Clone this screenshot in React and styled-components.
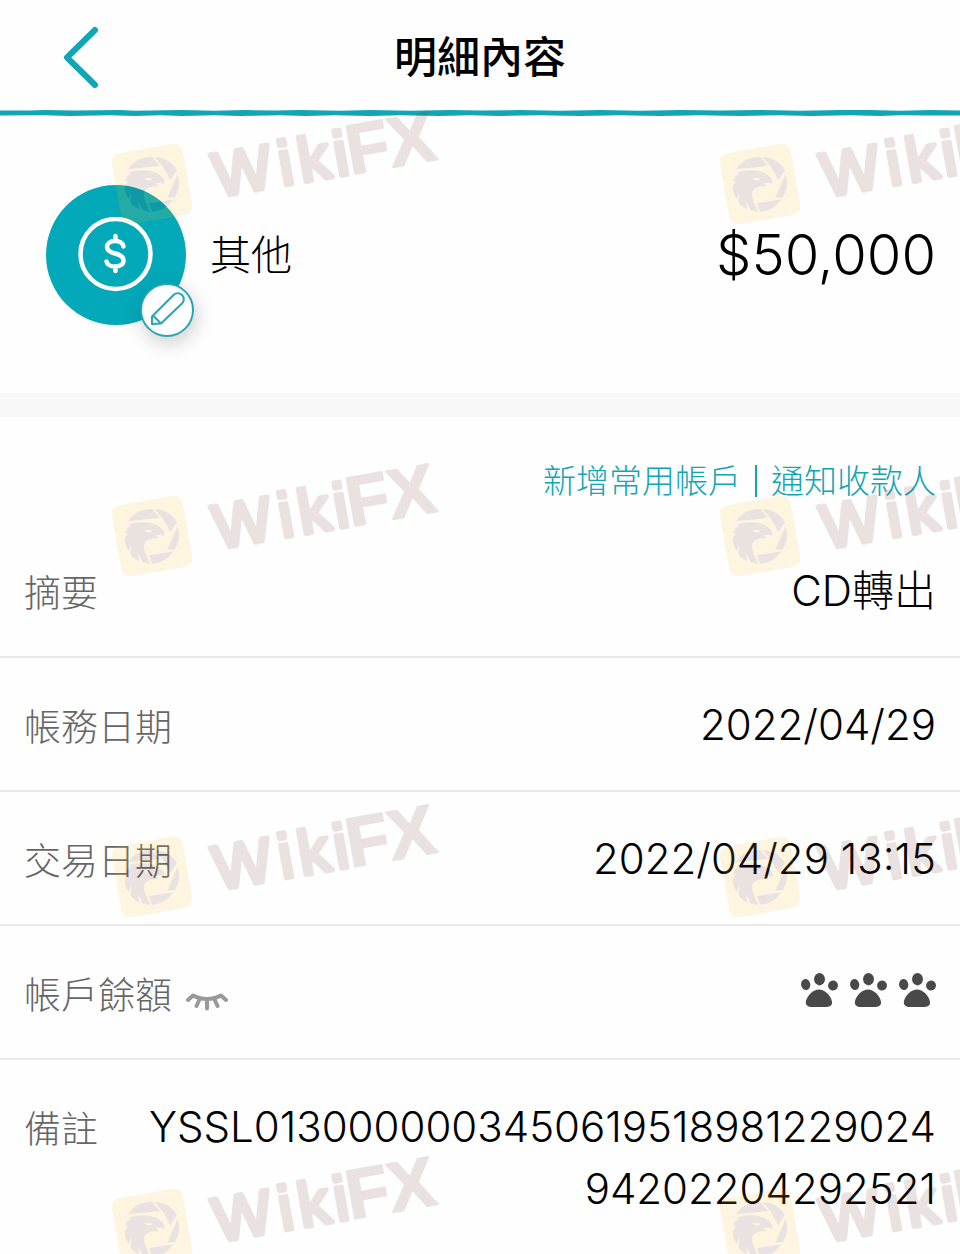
import React, { useState } from "react";
import styled, { createGlobalStyle } from "styled-components";

const details = [
  { label: "摘要", value: "CD轉出" },
  { label: "帳務日期", value: "2022/04/29" },
  { label: "交易日期", value: "2022/04/29 13:15" },
];

const note = "YSSL013000000345061951898122902494202204292521";

const App = () => {
  const [hidden, setHidden] = useState(true);
  return (
    <Page>
      <GlobalStyle />
      <Header>
        <BackButton type="button" aria-label="返回">
          <svg width="40" height="64" viewBox="0 0 40 64">
            <path d="M35 5L7 32.500L35 60" />
          </svg>
        </BackButton>
        <h1>明細內容</h1>
      </Header>
      <BrushLine />
      <Summary>
        <Category>
          <DollarIcon />
          <EditButton type="button" aria-label="編輯分類">
            <PencilIcon />
          </EditButton>
        </Category>
        <h2>其他</h2>
        <Amount>$50,000</Amount>
      </Summary>
      <Band />
      <Actions>
        <ActionButton type="button">新增常用帳戶</ActionButton>
        <Divider />
        <ActionButton type="button">通知收款人</ActionButton>
      </Actions>
      <List>
        {details.map((item) => (
          <Row key={item.label}>
            <dt>{item.label}</dt>
            <dd>{item.value}</dd>
          </Row>
        ))}
        <Row>
          <dt>
            帳戶餘額
            <EyeButton
              type="button"
              aria-label="顯示餘額"
              aria-pressed={!hidden}
              onClick={() => setHidden(!hidden)}
            >
              <ClosedEye />
            </EyeButton>
          </dt>
          <Paws>
            <Paw />
            <Paw />
            <Paw />
          </Paws>
        </Row>
        <Row $last>
          <dt>備註</dt>
          <dd>{note}</dd>
        </Row>
      </List>
      <Watermarks aria-hidden="true">
        {[...Array(8)].map((_, i) => (
          <Watermark key={i} />
        ))}
      </Watermarks>
    </Page>
  );
};

const BrushLine = () => (
  <Brush viewBox="0 0 960 6" preserveAspectRatio="none" aria-hidden="true">
    <path d="M0 .5L30 .6L45 0L75 .6L120 .1L135 .8L165 .2L182 0L215 .7L245 .1L275 .5L300 0L340 .7L370 0L410 .7L450 0L480 .5L520 0L560 .7L600 0L640 .7L680 0L720 .6L760 0L800 .7L840 0L870 0L900 .7L930 0L960 .5V5.400L930 5.600L900 5.200L880 6L850 5.300L810 5.900L780 5.200L740 5.900L700 5.200L660 5.900L620 5.300L580 6L540 5.200L500 5.900L470 5.300L440 5.900L400 5.200L370 6L335 5.300L305 6L280 5.300L240 6L215 5.300L182 6L160 5.300L135 6L110 5.300L70 5.900L45 5.300L0 5.500Z" />
  </Brush>
);

const DollarIcon = () => (
  <svg width="76" height="76" viewBox="0 0 76 76" fill="none" stroke="#fff">
    <circle cx="37.500" cy="37" r="35" strokeWidth="4.500" />
    <path
      d="M45.500 29.500C45 26 41.500 24 37 24C32 24 29 26.800 29 30C29 34 32 35.300 37 36.500C42.500 37.800 45.500 39.500 45.500 43.500C45.500 47.500 42 49.500 37 49.500C32.500 49.500 29 47.500 28.500 44.500M37.500 19V24M37.500 49.500V54"
      strokeWidth="4.500"
      strokeLinecap="round"
    />
  </svg>
);

const PencilIcon = () => (
  <svg width="36" height="36" viewBox="0 0 36 36" fill="none" stroke="#26a5b3">
    <path
      d="M3 32V24.500L24.500 3A6 6 0 0 1 33 11.500L12 31.500L3 32ZM4.500 24L12 31.500"
      strokeWidth="2"
      strokeLinejoin="round"
    />
  </svg>
);

const ClosedEye = () => (
  <svg width="44" height="20" viewBox="0 0 44 20" fill="none" stroke="#999">
    <path
      d="M4 9L9 4.500C17 9 29 9 37 4.500L42 9M15.500 8.500L12.500 15M23 9V17.500M30.500 8.500L33.500 15"
      strokeWidth="4"
      strokeLinecap="round"
      strokeLinejoin="round"
    />
  </svg>
);

const Paw = () => (
  <svg width="37" height="36" viewBox="0 0 37 36" fill="#4a494a">
    <ellipse cx="4.700" cy="12.500" rx="4.600" ry="5.600" transform="rotate(-8 4.700 12.500)" />
    <ellipse cx="18.500" cy="7.200" rx="5.400" ry="6.200" />
    <ellipse cx="32" cy="13.500" rx="4.900" ry="5" transform="rotate(20 32 13.500)" />
    <path d="M18 17.500C23.500 17.500 30 23.500 31 30C31.500 34 28 35 24 35H11C7 35 4 33 5 29C6.500 23 12.500 17.500 18 17.500Z" />
  </svg>
);

const Watermark = () => (
  <Mark width="350" height="140" viewBox="0 0 350 140">
    <rect x="16" y="50" width="72" height="72" rx="9" fill="#ffc120" transform="rotate(-10 52 86)" />
    <g transform="scale(.33333)" fill="#643228">
      <path d="M84 214C99 189 123 177 156 176L179 204L84 214Z" />
      <path d="M163 177C193 178 217 192 231 216L211 246L190 208Z" />
      <path d="M233 228C241 252 237 278 224 298L202 299Z" />
      <path d="M147 316L220 304C204 328 182 340 156 341Z" />
      <path
        d="M88 223C108 216 130 215 150 219C169 222 180 230 188 239C194 246 195 254 192 259C186 253 176 254 166 256C175 261 176 264 173 265C157 264 138 268 133 281C127 299 142 318 151 341C142 341 134 339 128 337L114 308L118 334C105 329 97 321 91 312L95 283L86 303C76 288 73 275 75 263L86 248L76 251C78 241 81 235 85 232L94 231ZM133 239L158 242C151 250 139 248 133 239Z"
        fillRule="evenodd"
      />
    </g>
    <MarkText transform="translate(118 103) rotate(-10)">
      <text x="0 66 86 122" y="-4" fontSize="62" fontWeight="400" strokeWidth="5">
        Wiki
      </text>
      <text x="135" y="-3" fontSize="70" fontWeight="700" strokeWidth="2">
        FX
      </text>
    </MarkText>
  </Mark>
);

const Mark = styled.svg`
  overflow: visible;
`;

const MarkText = styled.g`
  fill: #643228;
  stroke: #643228;
  stroke-linejoin: round;
  font-family: "Liberation Sans", Arial, sans-serif;
`;

const GlobalStyle = createGlobalStyle`
  * {
    margin: 0;
    padding: 0;
    box-sizing: border-box;
  }
  body {
    background: #fefefe;
    color: #000;
    font-family: Inter, "Noto Sans CJK TC", sans-serif;
    font-weight: 300;
  }
  button {
    border: none;
    background: none;
    color: inherit;
    font: inherit;
    cursor: pointer;
  }
  svg {
    display: block;
  }
`;

const Page = styled.main`
  position: relative;
  min-height: 100vh;
  overflow: hidden;
`;

const Header = styled.header`
  display: grid;
  grid-template-columns: 1fr auto 1fr;
  align-items: center;
  height: 110px;
  padding: 4px 60px 0;
  h1 {
    font-size: 43px;
    line-height: 60px;
    font-weight: 500;
  }
`;

const BackButton = styled.button`
  justify-self: start;
  path {
    fill: none;
    stroke: #12a5b4;
    stroke-width: 6;
    stroke-linecap: round;
    stroke-linejoin: round;
  }
`;

const Brush = styled.svg`
  width: 100%;
  height: 6px;
  fill: #12a5b4;
`;

const Summary = styled.section`
  display: flex;
  align-items: center;
  gap: 24px;
  height: 277px;
  padding: 0 24px 0 46px;
  h2 {
    font-size: 41px;
    line-height: 60px;
    font-weight: 300;
  }
`;

const Category = styled.div`
  position: relative;
  display: grid;
  place-items: center;
  width: 140px;
  height: 140px;
  border-radius: 50%;
  background: #03a9b9;
`;

const EditButton = styled.button`
  position: absolute;
  right: -8px;
  bottom: -12px;
  display: grid;
  place-items: center;
  width: 54px;
  height: 54px;
  border: 2px solid #26a5b3;
  border-radius: 50%;
  background: #fff;
  box-shadow: 2px 6px 20px rgba(0, 0, 0, 0.2);
`;

const Amount = styled.p`
  margin-left: auto;
  font-size: 56px;
  line-height: 64px;
`;

const Band = styled.div`
  height: 24px;
  background: #f8f8f8;
`;

const Actions = styled.div`
  display: flex;
  align-items: center;
  justify-content: flex-end;
  height: 107px;
  padding: 20px 24px 0;
`;

const ActionButton = styled.button`
  color: #12a5b4;
  font-size: 33px;
  line-height: 48px;
`;

const Divider = styled.span`
  width: 2px;
  height: 32px;
  margin: 0 14px;
  background: #12a5b4;
`;

const List = styled.dl`
  width: 100%;
`;

const Row = styled.div`
  display: flex;
  justify-content: space-between;
  gap: 32px;
  padding: 36px 24px 34px;
  border-bottom: ${({ $last }) => ($last ? "none" : "2px solid #e8e8e8")};
  dt {
    display: flex;
    align-items: center;
    flex-shrink: 0;
    height: 62px;
    color: #666;
    font-size: 37px;
  }
  dd {
    font-size: 42px;
    line-height: 62px;
    text-align: right;
    word-break: break-all;
  }
`;

const EyeButton = styled.button`
  margin: 16px 0 0 12px;
`;

const Paws = styled.dd`
  display: flex;
  align-items: center;
  gap: 12px;
  height: 56px;
`;

const Watermarks = styled.div`
  position: absolute;
  inset: 98px 0 0 100px;
  display: grid;
  grid-template-columns: repeat(2, 608px);
  grid-template-rows: 352px 341px 352px 352px;
  overflow: hidden;
  opacity: 0.13;
  pointer-events: none;
`;

export default App;
